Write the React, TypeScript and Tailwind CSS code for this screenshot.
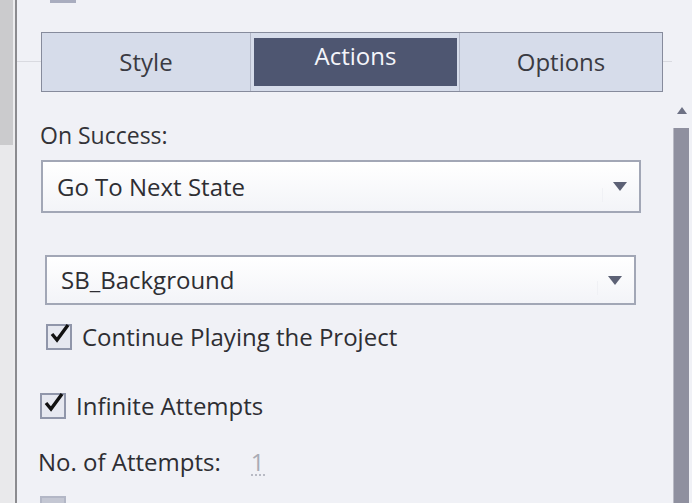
import React from 'react';

const font = { fontFamily: '"Segoe UI", "Open Sans", "Noto Sans", sans-serif' };

function Arrow() {
  return (
    <svg width="14" height="9" viewBox="0 0 14 9" className="shrink-0">
      <path d="M0 0 H14 L7 9 Z" fill="#5c6175" />
    </svg>
  );
}

function Check({ checked = true, dim = false }: { checked?: boolean; dim?: boolean }) {
  return (
    <div
      className={`relative flex h-[26px] w-[26px] shrink-0 items-center justify-center border-2 ${
        dim ? 'border-[#b3b7c6] bg-[#c4c7d3]' : 'border-[#9096aa] bg-[#e6e8f0]'
      }`}
    >
      {checked && (
        <svg width="22" height="20" viewBox="0 0 22 20" className="absolute -top-[3px] left-[1px]">
          <path d="M3 11 L8 17 L19 2" fill="none" stroke="#111" strokeWidth="3.4" strokeLinejoin="miter" />
        </svg>
      )}
    </div>
  );
}

function Dropdown({ label, className }: { label: string; className: string }) {
  return (
    <div
      className={`flex shrink-0 items-center border-2 border-[#a2a7b6] bg-gradient-to-b from-white to-[#f3f4f8] ${className}`}
    >
      <span className="flex-1 text-[24px] leading-[28px] text-[#2e2e33]">{label}</span>
      <div className="mr-[10px] mt-[16px] h-[14px] w-px bg-[#f0f1f5]" />
      <Arrow />
    </div>
  );
}

export default function App() {
  return (
    <div className="flex h-[503px] w-[692px] overflow-hidden bg-[#f0f1f6]" style={font}>
      {/* left edge */}
      <div className="flex w-[13px] shrink-0 flex-col">
        <div className="h-[145px] shrink-0 bg-[#cbcbcd]" />
        <div className="flex-1 bg-[#e9e9eb]" />
      </div>
      <div className="w-[2px] shrink-0 bg-[#ececee]" />
      <div className="w-[2px] shrink-0 bg-[#8b8b8f]" />

      {/* panel */}
      <div className="flex min-h-0 flex-1 flex-col">
        {/* cut off row at top */}
        <div className="-mt-[23px] ml-[33px] flex shrink-0 items-center gap-3">
          <div className="h-[26px] w-[26px] bg-[#a9adbf]" />
        </div>

        {/* tabs */}
        <div className="relative mt-[29px] flex shrink-0">
          <div className="absolute left-0 right-0 top-[29px] h-px bg-[#d9dae0]" />
          <div className="relative ml-[24px] flex h-[60px] w-[622px] border border-[#868b9c] bg-[#d6dcea] text-[24px] leading-[26px]">
            <div className="flex w-[209px] items-center justify-center border-r border-[#b3b8c8] text-[#3a3a42]">
              Style
            </div>
            <div className="flex w-[208px] py-[5px] pl-[3px] pr-[2px]">
              <div className="flex flex-1 items-start justify-center bg-[#4e5671] pt-[5px] text-[#f4f5fa]">
                Actions
              </div>
            </div>
            <div className="flex flex-1 items-center justify-center border-l border-[#b3b8c8] text-[#3a3a42]">
              Options
            </div>
          </div>
        </div>

        <div className="mt-[30px] shrink-0 pl-[23px] text-[23px] leading-[26px] text-[#333338]">On Success:</div>

        <Dropdown label="Go To Next State" className="ml-[24px] mt-[12px] h-[53px] w-[600px] pl-[14px] pr-[12px]" />

        <Dropdown label="SB_Background" className="ml-[28px] mt-[42px] h-[50px] w-[591px] pl-[14px] pr-[12px]" />

        <div className="ml-[29px] mt-[19px] flex h-[26px] shrink-0 items-center gap-[10px] text-[24px] leading-[26px] text-[#2e2e33]">
          <Check />
          <span>Continue Playing the Project</span>
        </div>

        <div className="ml-[23px] mt-[43px] flex h-[26px] shrink-0 items-center gap-[10px] text-[24px] leading-[26px] text-[#2e2e33]">
          <Check />
          <span>Infinite Attempts</span>
        </div>

        <div className="ml-[21px] mt-[30px] flex h-[26px] shrink-0 items-baseline text-[24px] leading-[26px] text-[#2e2e33]">
          <span>No. of Attempts:</span>
          <span className="ml-[30px] border-b-2 border-dotted border-[#b8bac4] leading-[24px] text-[#a9abb4]">1</span>
        </div>

        <div className="ml-[23px] mt-[21px] flex shrink-0">
          <Check checked={false} dim />
        </div>
      </div>

      {/* scrollbar */}
      <div className="flex w-[20px] shrink-0 flex-col items-center">
        <div className="mt-[107px] h-[8px] shrink-0">
          <svg width="10" height="7" viewBox="0 0 10 7">
            <path d="M0 7 L5 0 L10 7 Z" fill="#6d7184" />
          </svg>
        </div>
        <div className="mt-[13px] mr-[2px] w-[16px] flex-1 border-l border-[#b9bac4] bg-[#8f909f]" />
      </div>
    </div>
  );
}
